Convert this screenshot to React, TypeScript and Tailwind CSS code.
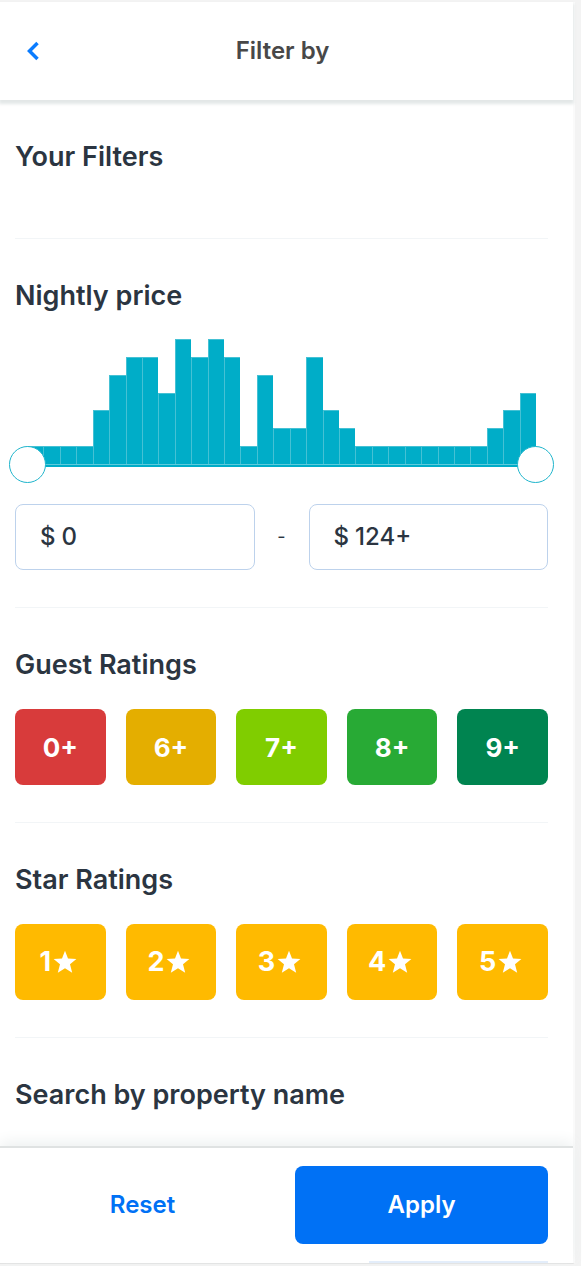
import { useState } from "react";
import type { ReactNode } from "react";

const priceBars = [
  1, 1, 1, 1, 3, 5, 6, 6, 4, 7, 6, 7, 6, 1, 5, 2, 2, 6, 3, 2, 1, 1, 1, 1, 1, 1, 1, 1, 2, 3, 4,
];
const BAR_LEVELS = 7;
const MAX_PRICE = 124;

const guestRatings = [
  { label: "0+", color: "bg-[#d83b3b]" },
  { label: "6+", color: "bg-[#e4ae00]" },
  { label: "7+", color: "bg-[#80cd00]" },
  { label: "8+", color: "bg-[#28aa35]" },
  { label: "9+", color: "bg-[#008450]" },
];

const thumbClasses =
  "pointer-events-none absolute inset-0 h-full w-full appearance-none bg-transparent focus:outline-none [&::-webkit-slider-thumb]:pointer-events-auto [&::-webkit-slider-thumb]:size-[37px] [&::-webkit-slider-thumb]:appearance-none [&::-webkit-slider-thumb]:rounded-full [&::-webkit-slider-thumb]:border [&::-webkit-slider-thumb]:border-solid [&::-webkit-slider-thumb]:border-[#1fb5cc] [&::-webkit-slider-thumb]:bg-white";

function StarIcon() {
  return (
    <svg viewBox="0 0 24 24" className="size-6 fill-white" aria-hidden="true">
      <path d="M12 0.8 15 8.4 23.4 9 17 14.3 19.2 22.8 12 18.2 4.8 22.8 7 14.3 0.6 9 9 8.4Z" />
    </svg>
  );
}

function Section({ title, children }: { title: string; children?: ReactNode }) {
  return (
    <section className="border-t border-[#f2f5f7] pt-[39px]">
      <h2 className="text-[27px] leading-9 font-semibold">{title}</h2>
      {children}
    </section>
  );
}

function PriceField({ id, label, value }: { id: string; label: string; value: string }) {
  return (
    <div className="flex h-[66px] min-w-0 flex-1 items-center gap-1.5 rounded-lg border border-[#bdd2ec] pr-3 pl-6 text-2xl font-medium">
      <label htmlFor={id} aria-label={label}>
        $
      </label>
      <input id={id} value={value} readOnly className="w-full min-w-0 bg-transparent outline-none" />
    </div>
  );
}

export default function App() {
  const [low, setLow] = useState(0);
  const [high, setHigh] = useState(MAX_PRICE);

  return (
    <div className="h-screen border-r border-white bg-[#f3f3f3] pt-0.5 pr-1.5 pb-0.5 font-['Inter',sans-serif] text-[#2b3541]">
      <div className="flex h-full flex-col border-r-2 border-b border-r-[#fafafa] border-b-[#e0e0e0] bg-white">
        <header className="z-10 grid h-[98px] shrink-0 grid-cols-[60px_1fr_60px] items-center shadow-[0_3px_3px_1px_#e3e7e7]">
          <button type="button" aria-label="Back" className="flex pl-[26px]">
            <svg viewBox="0 0 14 20" className="h-5 w-3.5 fill-none stroke-[#0a7cff] stroke-[3.5]" aria-hidden="true">
              <path d="M11.500 2 3.500 10l8 8" />
            </svg>
          </button>
          <h1 className="pr-2 text-center text-2xl font-semibold text-[#484848]">Filter by</h1>
        </header>

        <main className="min-h-0 flex-1 overflow-hidden pr-[25px] pl-[15px]">
          <section className="pt-[39px] pb-[63px]">
            <h2 className="text-[27px] leading-9 font-semibold">Your Filters</h2>
          </section>

          <Section title="Nightly price">
            <div className="relative mx-3 mt-[25px]">
              <div className="flex h-[126px] items-end border-b border-[#5fcbdc]">
                {priceBars.map((level, i) => (
                  <div
                    key={i}
                    className="flex-1 border-t border-l border-[#45c1d4] bg-[#00adc8]"
                    style={{ height: `${(level / BAR_LEVELS) * 100}%` }}
                  />
                ))}
              </div>
              <div className="h-0.5 bg-[#00adc8]" />
              <div className="absolute -inset-x-[18px] -bottom-4 h-[37px]">
                <input
                  type="range"
                  aria-label="Minimum nightly price"
                  max={MAX_PRICE}
                  value={low}
                  onChange={(e) => setLow(Math.min(Number(e.target.value), high))}
                  className={thumbClasses}
                />
                <input
                  type="range"
                  aria-label="Maximum nightly price"
                  max={MAX_PRICE}
                  value={high}
                  onChange={(e) => setHigh(Math.max(Number(e.target.value), low))}
                  className={thumbClasses}
                />
              </div>
            </div>
            <div className="my-[37px] flex items-center">
              <PriceField id="price-min" label="Minimum price in dollars" value={`${low}`} />
              <span className="w-[54px] text-center text-lg">-</span>
              <PriceField
                id="price-max"
                label="Maximum price in dollars"
                value={high === MAX_PRICE ? `${high}+` : `${high}`}
              />
            </div>
          </Section>

          <Section title="Guest Ratings">
            <div className="mt-[26px] mb-[37px] grid grid-cols-5 gap-5">
              {guestRatings.map(({ label, color }) => (
                <button
                  key={label}
                  type="button"
                  className={`h-[76px] rounded-lg text-[26px] font-bold text-white ${color}`}
                >
                  {label}
                </button>
              ))}
            </div>
          </Section>

          <Section title="Star Ratings">
            <div className="mt-[26px] mb-[37px] grid grid-cols-5 gap-5">
              {[1, 2, 3, 4, 5].map((stars) => (
                <button
                  key={stars}
                  type="button"
                  aria-label={`${stars} star`}
                  className="flex h-[76px] items-center justify-center gap-0.5 rounded-lg bg-[#ffba00] pr-1 text-[27px] font-bold text-white"
                >
                  {stars}
                  <StarIcon />
                </button>
              ))}
            </div>
          </Section>

          <Section title="Search by property name" />
        </main>

        <footer className="z-10 flex shrink-0 flex-col border-t-2 border-[#dfe2e2] bg-white shadow-[0_-4px_14px_#edf0f0]">
          <div className="grid grid-cols-[1fr_253px] gap-[10px] pt-[18px] pr-[25px] pb-[17px]">
            <button type="button" className="h-[78px] text-2xl font-semibold text-[#0071f5]">
              Reset
            </button>
            <button
              type="button"
              className="h-[78px] rounded-lg bg-[#0071f5] text-2xl font-semibold text-white"
            >
              Apply
            </button>
          </div>
          <div className="mr-[25px] h-0.5 w-[179px] self-end bg-[#e3edfa]" />
        </footer>
      </div>
    </div>
  );
}
